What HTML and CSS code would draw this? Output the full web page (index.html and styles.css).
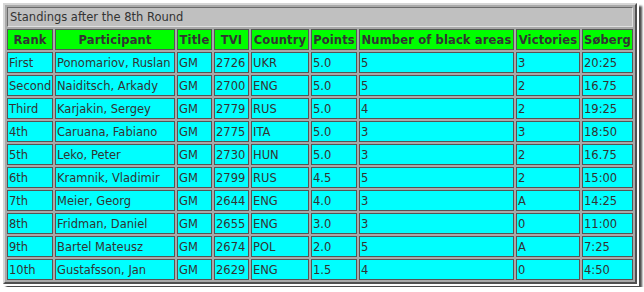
FILE: index.html
```html
<!DOCTYPE html>
<html>
<head>
<meta charset="utf-8">
<link rel="stylesheet" href="styles.css">
</head>
<body>
<div class="frame">
<table class="standings">
  <colgroup>
    <col class="c-rank"><col class="c-part"><col class="c-title"><col class="c-tvi"><col class="c-country"><col class="c-points"><col class="c-black"><col class="c-vic"><col class="c-sob">
  </colgroup>
  <tr><td class="caption" colspan="9">Standings after the 8th Round</td></tr>
  <tr class="head">
    <th>Rank</th><th>Participant</th><th>Title</th><th>TVI</th><th>Country</th><th>Points</th><th>Number of black areas</th><th>Victories</th><th>Søberg</th>
  </tr>
  <tr><td>First</td><td>Ponomariov, Ruslan</td><td>GM</td><td>2726</td><td>UKR</td><td>5.0</td><td>5</td><td>3</td><td>20:25</td></tr>
  <tr><td>Second</td><td>Naiditsch, Arkady</td><td>GM</td><td>2700</td><td>ENG</td><td>5.0</td><td>5</td><td>2</td><td>16.75</td></tr>
  <tr><td>Third</td><td>Karjakin, Sergey</td><td>GM</td><td>2779</td><td>RUS</td><td>5.0</td><td>4</td><td>2</td><td>19:25</td></tr>
  <tr><td>4th</td><td>Caruana, Fabiano</td><td>GM</td><td>2775</td><td>ITA</td><td>5.0</td><td>3</td><td>3</td><td>18:50</td></tr>
  <tr><td>5th</td><td>Leko, Peter</td><td>GM</td><td>2730</td><td>HUN</td><td>5.0</td><td>3</td><td>2</td><td>16.75</td></tr>
  <tr><td>6th</td><td>Kramnik, Vladimir</td><td>GM</td><td>2799</td><td>RUS</td><td>4.5</td><td>5</td><td>2</td><td>15:00</td></tr>
  <tr><td>7th</td><td>Meier, Georg</td><td>GM</td><td>2644</td><td>ENG</td><td>4.0</td><td>3</td><td>A</td><td>14:25</td></tr>
  <tr><td>8th</td><td>Fridman, Daniel</td><td>GM</td><td>2655</td><td>ENG</td><td>3.0</td><td>3</td><td>0</td><td>11:00</td></tr>
  <tr><td>9th</td><td>Bartel Mateusz</td><td>GM</td><td>2674</td><td>POL</td><td>2.0</td><td>5</td><td>A</td><td>7:25</td></tr>
  <tr><td>10th</td><td>Gustafsson, Jan</td><td>GM</td><td>2629</td><td>ENG</td><td>1.5</td><td>4</td><td>0</td><td>4:50</td></tr>
</table>
</div>
</body>
</html>
```
FILE: styles.css
```css
html, body {
  margin: 0;
  padding: 0;
  background: #ffffff;
}
.frame {
  padding: 3px;
}
.standings {
  table-layout: fixed;
  width: 634px;
  border-collapse: separate;
  border-spacing: 2px;
  background: #a9a9a9;
  border: 2px solid;
  border-color: #d6d6d6 #505050 #505050 #d6d6d6;
  font-family: "DejaVu Sans", sans-serif;
  font-size: 11.5px;
  color: #333333;
  box-shadow: 1px 1px 0 1px #ffffff, 4px 4px 2px 1px #4a4a4a;
}
.c-rank { width: 46px; }
.c-part { width: 120px; }
.c-title { width: 35px; }
.c-tvi { width: 35px; }
.c-country { width: 58px; }
.c-points { width: 46px; }
.c-black { width: 155px; }
.c-vic { width: 64px; }
.c-sob { width: 51px; }
.standings td, .standings th {
  border: 1px solid #555555;
  padding: 0 1px;
  white-space: nowrap;
  overflow: hidden;
  text-align: left;
  box-sizing: border-box;
}
.standings td {
  background: #00ffff;
  font-weight: normal;
  height: 21px;
}
.standings .head th {
  background: #00ff00;
  font-weight: bold;
  font-size: 11.5px;
  letter-spacing: 0.15px;
  text-align: center;
  height: 21px;
  padding: 0;
}
.standings td.caption {
  background: #c0c0c0;
  height: 20px;
  padding-left: 2px;
  border-color: #6a6a6a #e0e0e0 #e0e0e0 #6a6a6a;
}
```
